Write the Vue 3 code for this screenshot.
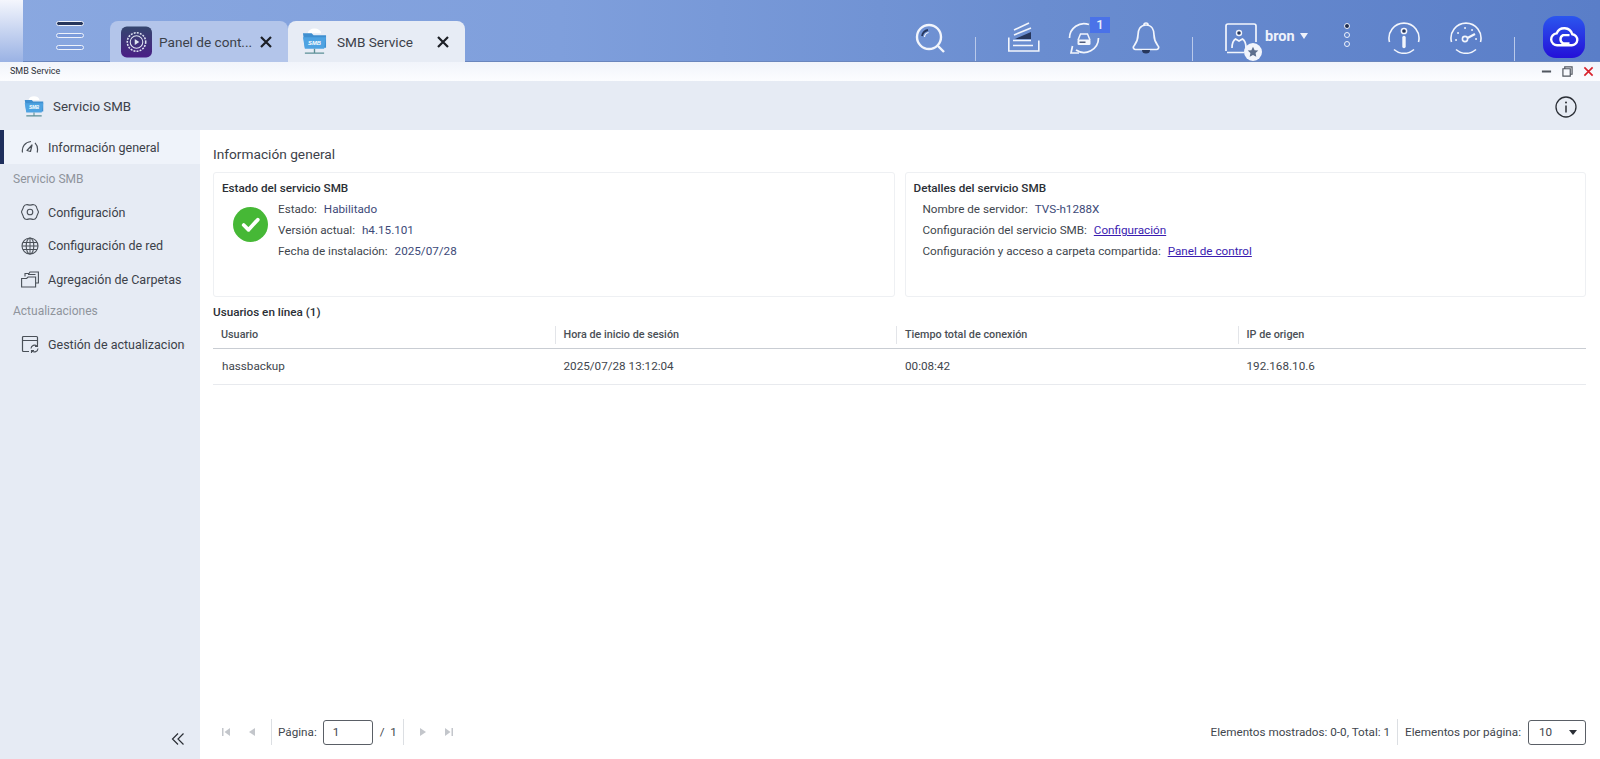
<template>
  <div class="desktop">
    <!-- barra superior -->
    <header class="topbar">
      <div class="edge"></div>
      <button class="menu-btn" aria-label="menu"><span class="dark"></span><span></span><span></span></button>
      <div class="tabs">
        <div class="tab">
          <svg class="tab-icon" viewBox="0 0 32 32">
            <defs><linearGradient id="cp" x1="0" y1="0" x2="0" y2="1"><stop offset="0" stop-color="#34466e" /><stop offset="1" stop-color="#4a1f86" /></linearGradient></defs>
            <rect width="32" height="32" rx="6" fill="url(#cp)" />
            <circle cx="16" cy="16" r="9.5" fill="none" stroke="#dfe5f2" stroke-width="1.6" stroke-dasharray="2 1.2" />
            <circle cx="16" cy="16" r="6.5" fill="none" stroke="#dfe5f2" stroke-width="1.1" />
            <path d="M14.2 13v6l4.6-3z" fill="#dfe5f2" />
          </svg>
          <span class="tab-label">Panel de cont...</span>
          <svg class="tab-x" viewBox="0 0 14 14"><path d="M2 2l10 10M12 2L2 12" stroke="#1c1f26" stroke-width="2.2" /></svg>
        </div>
        <div class="tab active">
          <svg class="tab-icon smb" viewBox="0 0 26 28">
            <path d="M6 5a7 5 0 0 1 14 0z" fill="#fff" />
            <path d="M1 5h9l2 2h13v13H3z" fill="#3f8fd0" />
            <path d="M1 9h24l-2 12H3z" fill="#4ea3e2" />
            <text x="13" y="17" text-anchor="middle" class="smb-text">SMB</text>
            <path d="M13 21v4M3 25.5h20" stroke="#5c8f96" stroke-width="1.4" />
          </svg>
          <span class="tab-label">SMB Service</span>
          <svg class="tab-x" viewBox="0 0 14 14"><path d="M2 2l10 10M12 2L2 12" stroke="#1c1f26" stroke-width="2.2" /></svg>
        </div>
      </div>

      <div class="tools">
        <svg class="ico search" viewBox="0 0 31 31">
          <circle cx="14" cy="15" r="12" stroke-width="2.4" />
          <path d="M23 24l6 6" stroke-width="2.4" />
          <path d="M7 14a7.5 7.5 0 0 1 6-6" stroke="#26365c" stroke-width="1.8" />
          <path d="M9.5 15a5 5 0 0 1 4-4.5" stroke-width="1.2" />
        </svg>
        <i class="sep"></i>
        <svg class="ico stack" viewBox="0 0 32 32">
          <path d="M.8 15.5V29h30V18.5" stroke-width="1.6" />
          <path d="M6 8l15-7M6 13l17-7M5 18.5h18M5 23.5h20" stroke-width="1.6" />
          <path d="M7 17l16-7v7z" fill="#26365c" stroke="none" />
        </svg>
        <div class="sync">
          <svg class="ico" viewBox="0 0 32 32">
            <path d="M1.5 16A14.5 14.5 0 0 1 21 2.500M30.500 16A14.500 14.500 0 0 1 8 28" stroke-width="1.7" />
            <path d="M11 31H3l1.500-7" stroke-width="1.7" />
            <path d="M10 18l2.500-6h7l2.500 6" stroke-width="1.5" />
            <rect x="9.5" y="17.5" width="13" height="5.5" rx="1.2" fill="#f2f5fc" stroke="none" />
            <path d="M11.5 20.2h6" stroke="#26365c" stroke-width="1.2" />
          </svg>
          <span class="badge">1</span>
        </div>
        <svg class="ico bell" viewBox="0 0 28 32">
          <path d="M14 3C8 3 6 8 6 13c0 6-2 8-4.500 11.500C.8 26 2 27.500 3.500 27.500h21c1.500 0 2.700-1.500 2-3C24 21 22 19 22 13c0-5-2-10-8-10z" stroke-width="1.7" />
          <path d="M12 3a2 2 0 0 1 4 0" stroke-width="1.7" />
          <path d="M10 28a4 3.5 0 0 0 8 0z" fill="#26365c" stroke="none" />
        </svg>
        <i class="sep sep-b"></i>
        <div class="user">
          <svg class="ico" viewBox="0 0 32 32">
            <path d="M1 29V4a2 2 0 0 1 2-2h26a2 2 0 0 1 2 2v16M2 30.500h17" stroke-width="1.7" />
            <circle cx="14" cy="11" r="2.5" fill="#26365c" stroke-width="1.4" />
            <path d="M7 26c0-5 2-8 3.500-9l3.500 2 3.500-2c1.500 1 3.500 4 3.500 9" stroke-width="1.7" />
          </svg>
          <span class="star">
            <svg viewBox="0 0 12 12"><path d="M6 .8l1.600 3.400 3.700.4-2.700 2.500.7 3.700L6 9l-3.300 1.800.7-3.700L.7 4.600l3.700-.4z" fill="#5d6f8e" /></svg>
          </span>
        </div>
        <span class="username">bron</span>
        <span class="caret"></span>
        <div class="dots"><b class="on"></b><b></b><b></b></div>
        <svg class="ico info" viewBox="0 0 32 32">
          <path d="M1.500 20A15 15 0 1 1 30.500 20M6 27.500a15 15 0 0 0 20 0" stroke-width="1.6" />
          <circle cx="16" cy="9" r="2.6" fill="#26365c" stroke-width="1.5" />
          <path d="M16 15.500v9" stroke-width="3.4" stroke-linecap="round" />
        </svg>
        <svg class="ico gauge" viewBox="0 0 32 32">
          <path d="M1.500 20A15 15 0 1 1 30.500 20M6 27.500a15 15 0 0 0 20 0" stroke-width="1.6" />
          <path d="M6 18h.1M8 11h.1M15 6h.1M22 8h.1M26 17h.1" stroke-width="1.8" stroke-linecap="round" />
          <circle cx="15" cy="17" r="2.6" stroke-width="1.6" />
          <path d="M17.500 16l7.500-4" stroke-width="2.2" />
        </svg>
        <i class="sep sep-c"></i>
        <div class="cloud-btn">
          <svg viewBox="0 0 32 24" width="30" height="22">
            <path d="M9 21h15a6 6 0 0 0 1-12A9 9 0 0 0 8 8a6.500 6.500 0 0 0 1 13z" fill="none" stroke="#fff" stroke-width="2.6" />
            <path d="M22 10h-7a5 5 0 0 0 0 9h7" fill="none" stroke="#fff" stroke-width="2.6" />
          </svg>
        </div>
      </div>
    </header>

    <!-- barra de titulo de la ventana -->
    <div class="titlebar">
      <span class="win-title">SMB Service</span>
      <div class="win-btns">
        <svg viewBox="0 0 12 12"><path d="M1 6h10" stroke="#50565f" stroke-width="2.2" /></svg>
        <svg viewBox="0 0 12 12"><path d="M3 2.500V1h8v8H9.500M1 3h8v8H1z" fill="none" stroke="#50565f" stroke-width="1.3" /></svg>
        <svg viewBox="0 0 12 12"><path d="M1.500 1.500l9 9M10.500 1.500l-9 9" stroke="#d8222c" stroke-width="1.8" /></svg>
      </div>
    </div>

    <div class="app-head">
      <svg class="head-icon" viewBox="0 0 26 28">
        <path d="M6 5a7 5 0 0 1 14 0z" fill="#fff" />
        <path d="M1 5h9l2 2h13v13H3z" fill="#3f8fd0" />
        <path d="M1 9h24l-2 12H3z" fill="#4ea3e2" />
        <text x="13" y="17" text-anchor="middle" class="smb-text">SMB</text>
        <path d="M13 21v4M3 25.5h20" stroke="#5c8f96" stroke-width="1.4" />
      </svg>
      <span class="head-title">Servicio SMB</span>
      <svg class="head-info" viewBox="0 0 22 22">
        <circle cx="11" cy="11" r="10" fill="none" stroke="#2b2f36" stroke-width="1.3" />
        <path d="M11 9.500v7" stroke="#2b2f36" stroke-width="1.5" />
        <circle cx="11" cy="6.500" r="1" fill="#2b2f36" />
      </svg>
    </div>

    <div class="body">
      <aside class="sidebar">
        <div v-for="item in navItems" :key="item.label" :class="item.section ? 'nav-section' : ['nav-item', { active: item.active }]">
          <template v-if="item.section">{{ item.label }}</template>
          <template v-else>
            <svg class="nav-icon" viewBox="0 0 18 18" v-html="item.icon"></svg>
            <span class="nav-label">{{ item.label }}</span>
          </template>
        </div>
        <svg class="collapse" viewBox="0 0 14 14">
          <path d="M7 1.500L1.500 7 7 12.500M12.500 1.500L7 7l5.500 5.500" fill="none" stroke="#2b2f36" stroke-width="1.2" />
        </svg>
      </aside>

      <main class="main">
        <h1 class="page-title">Información general</h1>
        <div class="cards">
          <section class="card">
            <h2>Estado del servicio SMB</h2>
            <div class="status">
              <svg class="ok" viewBox="0 0 36 36">
                <circle cx="18" cy="18" r="18" fill="#46b836" />
                <path d="M11 18.500l5 5 9.500-10.500" fill="none" stroke="#fff" stroke-width="3.8" stroke-linecap="round" stroke-linejoin="round" />
              </svg>
              <div>
                <p v-for="row in statusRows" :key="row.k">{{ row.k }}: <span class="val blue">{{ row.v }}</span></p>
              </div>
            </div>
          </section>
          <section class="card">
            <h2>Detalles del servicio SMB</h2>
            <div class="details">
              <p>Nombre de servidor: <span class="val blue">TVS-h1288X</span></p>
              <p>Configuración del servicio SMB: <a class="val" href="#">Configuración</a></p>
              <p>Configuración y acceso a carpeta compartida: <a class="val" href="#">Panel de control</a></p>
            </div>
          </section>
        </div>

        <h3 class="users-title">Usuarios en línea (1)</h3>
        <table class="users">
          <colgroup><col class="c" /><col class="c" /><col class="c" /><col /></colgroup>
          <thead>
            <tr><th v-for="col in columns" :key="col"><span>{{ col }}</span></th></tr>
          </thead>
          <tbody>
            <tr>
              <td>hassbackup</td>
              <td>2025/07/28 13:12:04</td>
              <td>00:08:42</td>
              <td>192.168.10.6</td>
            </tr>
          </tbody>
        </table>

        <footer class="pager">
          <div class="pager-left">
            <svg class="pg" viewBox="0 0 10 10"><path d="M1 1h1.500v8H1zM9 1v8L3.500 5z" /></svg>
            <svg class="pg" viewBox="0 0 10 10"><path d="M8 1v8L2 5z" /></svg>
            <i class="pg-sep"></i>
            <span>Página:</span>
            <div class="pg-input">1</div>
            <span class="of">/&nbsp;&nbsp;1</span>
            <i class="pg-sep"></i>
            <svg class="pg" viewBox="0 0 10 10"><path d="M2 1v8l6-4z" /></svg>
            <svg class="pg" viewBox="0 0 10 10"><path d="M1 1v8l5.500-4zM7.500 1H9v8H7.500z" /></svg>
          </div>
          <div class="pager-right">
            <span>Elementos mostrados: 0-0, Total: 1</span>
            <i class="pg-sep"></i>
            <span>Elementos por página:</span>
            <div class="pg-select">10<b></b></div>
          </div>
        </footer>
      </main>
    </div>
  </div>
</template>

<script setup>
const navItems = [
  {
    label: 'Información general',
    active: true,
    icon: '<path d="M1.500 14.500C.5 9 4 4 10 3.500M14 4.800c2.500 2.500 3 6 2.200 9.700M6 12.500L11 7l-1.500 6.500z" fill="none" stroke="#4a5058" stroke-width="1.2" stroke-linejoin="round"/>'
  },
  { label: 'Servicio SMB', section: true },
  {
    label: 'Configuración',
    icon: '<path d="M6 1.500c1 .8 5 .8 6 0 1 0 3 1.200 3.500 2.200-.2 1.300 1.800 4.100 2 5.300-.2 1-2 4-2 5.300-.5 1-2.500 2.200-3.500 2.200-1-.8-5-.8-6 0-1 0-3-1.200-3.500-2.200.2-1.300-2-4.300-2-5.300s2.200-4 2-5.300C3 2.700 5 1.500 6 1.500z" fill="none" stroke="#4a5058" stroke-width="1.1" stroke-linejoin="round"/><circle cx="9" cy="9" r="2.800" fill="none" stroke="#4a5058" stroke-width="1.1"/>'
  },
  {
    label: 'Configuración de red',
    icon: '<circle cx="9" cy="9" r="8" fill="none" stroke="#4a5058" stroke-width="1.1"/><ellipse cx="9" cy="9" rx="3.800" ry="8" fill="none" stroke="#4a5058" stroke-width="1.1"/><path d="M1 9h16M9 1v16M2 5.500h14M2 12.500h14" stroke="#4a5058" stroke-width="1"/>'
  },
  {
    label: 'Agregación de Carpetas',
    icon: '<path d="M.6 8.500h5l1.500-1.500h7.500v10H.6zM4 6.500V3.500h4l1-1.500h8.400v11h-2.800M7 4.500h7.500" fill="none" stroke="#4a5058" stroke-width="1.1"/>'
  },
  { label: 'Actualizaciones', section: true },
  {
    label: 'Gestión de actualizaciones',
    icon: '<path d="M8 16.500H2.500a1 1 0 0 1-1-1v-13a1 1 0 0 1 1-1h13a1 1 0 0 1 1 1V9M1.500 5.500h15" fill="none" stroke="#4a5058" stroke-width="1.2"/><path d="M10 13.500a3.500 3.500 0 0 1 6-2.300M17 13.500a3.500 3.500 0 0 1-6 2.300M16.500 9v2.500H14M10.500 18v-2.500H13" fill="none" stroke="#4a5058" stroke-width="1.1"/>'
  }
]

const statusRows = [
  { k: 'Estado', v: 'Habilitado' },
  { k: 'Versión actual', v: 'h4.15.101' },
  { k: 'Fecha de instalación', v: '2025/07/28' }
]

const columns = ['Usuario', 'Hora de inicio de sesión', 'Tiempo total de conexión', 'IP de origen']
</script>

<style>
html,
body {
  margin: 0;
  overflow: hidden;
}
</style>

<style scoped>
.desktop {
  width: 1600px;
  height: 759px;
  display: flex;
  flex-direction: column;
  font-family: Roboto, "Liberation Sans", sans-serif;
  color: #33383f;
  overflow: hidden;
}
.topbar {
  height: 62px;
  flex: none;
  display: flex;
  align-items: stretch;
  background: linear-gradient(90deg, #8aa8e0 0%, #7f9fdc 35%, #6a8dd0 65%, #5a7ec8 100%);
  box-shadow: inset 0 -1px 0 #6a86bd;
}
.edge {
  width: 23px;
  background: linear-gradient(180deg, #f4f6fd 0%, #9ab2e4 100%);
}
.menu-btn {
  width: 28px;
  height: 29px;
  margin: 21px 0 0 33px;
  padding: 0;
  border: 0;
  background: none;
  display: flex;
  flex-direction: column;
  gap: 7px;
}
.menu-btn span {
  display: block;
  height: 5px;
  box-sizing: border-box;
  border: 1px solid #eef2fb;
  border-radius: 3px;
  background: #7c9cdb;
}
.menu-btn .dark {
  background: #26365c;
}
.tabs {
  display: flex;
  align-items: flex-end;
  margin-left: 26px;
}
.tab {
  width: 178px;
  height: 41px;
  box-sizing: border-box;
  padding-left: 11px;
  display: flex;
  align-items: center;
  border-radius: 8px 8px 0 0;
  background: #b3c5ea;
  color: #3c4149;
  font-size: 13.6px;
}
.tab.active {
  width: 177px;
  background: #e7ecf5;
}
.tab-icon {
  width: 31px;
  height: 32px;
  flex: none;
}
.tab-icon.smb {
  width: 25px;
  height: 28px;
  margin-left: 3px;
}
.tab-label {
  margin-left: 7px;
  flex: 1;
  white-space: nowrap;
}
.tab.active .tab-label {
  margin-left: 10px;
}
.tab-x {
  width: 14px;
  height: 14px;
  margin-right: 15px;
}
.smb-text {
  font: italic 700 6px "Liberation Sans", sans-serif;
  fill: #fff;
}
.tools {
  display: flex;
  align-items: center;
  margin-left: 450px;
  padding-top: 13px;
  height: 49px;
}
.ico {
  width: 32px;
  height: 32px;
  flex: none;
  fill: none;
  stroke: #f2f5fc;
}
.search {
  width: 31px;
  height: 31px;
}
.sep {
  width: 1px;
  height: 24px;
  margin: 22px 0 0 29px;
  background: #b9c9ea;
}
.sep-b {
  margin-left: 32px;
}
.sep-c {
  margin-left: 32px;
}
.stack {
  margin-left: 32px;
}
.sync {
  position: relative;
  height: 32px;
  margin-left: 28px;
}
.badge {
  position: absolute;
  top: -5px;
  right: -10px;
  width: 20px;
  height: 16px;
  background: #4a72e8;
  color: #e9eefb;
  font-size: 13px;
  font-weight: 500;
  text-align: center;
  line-height: 16px;
}
.bell {
  width: 28px;
  margin-left: 32px;
}
.user {
  position: relative;
  height: 32px;
  margin-left: 32px;
}
.star {
  position: absolute;
  right: -5px;
  bottom: -7px;
  width: 18px;
  height: 18px;
  border-radius: 50%;
  background: #f2f5fc;
  display: flex;
  align-items: center;
  justify-content: center;
}
.star svg {
  width: 12px;
  height: 12px;
}
.username {
  margin: -3px 0 0 8px;
  color: #eef2fb;
  font-size: 14.5px;
  font-weight: 700;
}
.caret {
  margin: -3px 0 0 5px;
  border: 4.5px solid transparent;
  border-top: 6px solid #eef2fb;
  border-bottom: 0;
}
.dots {
  margin: -5px 0 0 36px;
  display: flex;
  flex-direction: column;
  gap: 3px;
}
.dots b {
  width: 6px;
  height: 6px;
  box-sizing: border-box;
  border: 1px solid #eef2fb;
  border-radius: 50%;
}
.dots .on {
  background: #1c2a4d;
}
.info {
  margin-left: 38px;
}
.gauge {
  margin-left: 30px;
}
.cloud-btn {
  width: 42px;
  height: 42px;
  margin: -1px 0 0 28px;
  border-radius: 13px;
  background: linear-gradient(180deg, #2b56ee 0%, #2410d8 100%);
  display: flex;
  align-items: center;
  justify-content: center;
}
.titlebar {
  height: 19px;
  flex: none;
  display: flex;
  align-items: center;
  justify-content: space-between;
  padding: 0 6px 0 10px;
  background: linear-gradient(180deg, #f1f4fb, #fcfdff);
  font-size: 9px;
  color: #2b2f36;
}
.win-title {
  margin-top: -2px;
}
.win-btns {
  display: flex;
  gap: 10px;
}
.win-btns svg {
  width: 11px;
  height: 11px;
}
.app-head {
  height: 49px;
  box-sizing: border-box;
  padding: 2px 23px 0 24px;
  flex: none;
  display: flex;
  align-items: center;
  background: #e6ebf4;
}
.head-icon {
  width: 20px;
  height: 22px;
}
.head-title {
  margin-left: 9px;
  flex: 1;
  font-size: 13.3px;
  color: #3c4149;
}
.head-info {
  width: 22px;
  height: 22px;
}
.body {
  flex: 1;
  display: flex;
  min-height: 0;
}
.sidebar {
  position: relative;
  width: 200px;
  flex: none;
  background: #e6ebf4;
  font-size: 12.5px;
}
.nav-item {
  height: 33.5px;
  display: flex;
  align-items: center;
  padding-left: 21px;
  box-sizing: border-box;
  color: #3c4149;
}
.nav-item.active {
  height: 34px;
  background: #eff3fa;
  box-shadow: inset 4px 0 0 #1f2f5c;
}
.nav-icon {
  width: 18px;
  height: 18px;
  flex: none;
}
.nav-label {
  margin-left: 9px;
  width: 137px;
  overflow: hidden;
  white-space: nowrap;
}
.nav-section {
  height: 31.5px;
  line-height: 30px;
  padding-left: 13px;
  font-size: 12px;
  color: #8f949c;
}
.collapse {
  position: absolute;
  right: 15px;
  bottom: 13px;
  width: 14px;
  height: 14px;
}
.main {
  flex: 1;
  min-width: 0;
  padding: 0 14px 0 13px;
  display: flex;
  flex-direction: column;
  background: #fff;
}
.page-title {
  margin: 16px 0 9px;
  font-size: 13.7px;
  line-height: 17px;
  font-weight: 400;
  color: #3c4149;
}
.cards {
  display: grid;
  grid-template-columns: 1fr 1fr;
  gap: 10px;
}
.card {
  height: 125px;
  box-sizing: border-box;
  padding: 8px;
  border: 1px solid #eef0f3;
  border-radius: 3px;
  font-size: 11.7px;
}
.card h2 {
  margin: 0 0 4px;
  font-size: 11.7px;
  line-height: 14px;
  font-weight: 500;
  color: #2b2f36;
}
.card p {
  margin: 0;
  line-height: 21px;
  color: #41464d;
}
.status {
  display: flex;
  align-items: flex-start;
  padding-left: 11px;
}
.ok {
  width: 35px;
  height: 35px;
  margin: 8px 10px 0 0;
}
.details {
  padding-left: 9px;
}
.val {
  margin-left: 4px;
  color: #41464d;
}
.val.blue {
  color: #3d4a78;
}
a.val {
  color: #3a1cb0;
}
.users-title {
  margin: 8px 0 0;
  font-size: 11.7px;
  line-height: 14px;
  font-weight: 500;
  color: #2b2f36;
}
.users {
  width: 100%;
  margin-top: 3px;
  table-layout: fixed;
  border-collapse: collapse;
  font-size: 11.7px;
}
.users .c {
  width: 341.5px;
}
.users th {
  height: 26px;
  padding: 0;
  border-bottom: 1px solid #c9cdd3;
  text-align: left;
  font-weight: 500;
  font-size: 10.8px;
  color: #4a4f56;
}
.users th span {
  display: block;
  padding-left: 8px;
  line-height: 18px;
  border-left: 1px solid #e3e5e9;
}
.users th:first-child span {
  border-left: 0;
}
.users td {
  height: 33px;
  padding: 0 0 2px 9px;
  border-bottom: 1px solid #e8eaee;
  color: #41464d;
}
.pager {
  margin-top: auto;
  height: 40px;
  flex: none;
  display: flex;
  align-items: flex-start;
  justify-content: space-between;
  font-size: 11.7px;
  color: #41464d;
}
.pager-left,
.pager-right {
  display: flex;
  align-items: center;
  height: 26px;
}
.pg {
  width: 10px;
  height: 10px;
  margin: 0 8px;
  fill: #c3c6cb;
}
.pg-sep {
  width: 1px;
  height: 26px;
  margin: 0 6px;
  background: #dcdfe3;
}
.pager-right .pg-sep {
  margin: 0 7px;
}
.pg-input {
  width: 50px;
  height: 25px;
  box-sizing: border-box;
  margin-left: 6px;
  padding-left: 9px;
  line-height: 23px;
  border: 1px solid #5a5f66;
  border-radius: 3px;
}
.of {
  margin-left: 7px;
}
.pg-select {
  position: relative;
  width: 58px;
  height: 25px;
  box-sizing: border-box;
  margin-left: 7px;
  padding-left: 10px;
  line-height: 23px;
  border: 1px solid #5a5f66;
  border-radius: 3px;
}
.pg-select b {
  position: absolute;
  right: 8px;
  top: 9px;
  border: 4px solid transparent;
  border-top: 5px solid #2b2f36;
  border-bottom: 0;
}
</style>
